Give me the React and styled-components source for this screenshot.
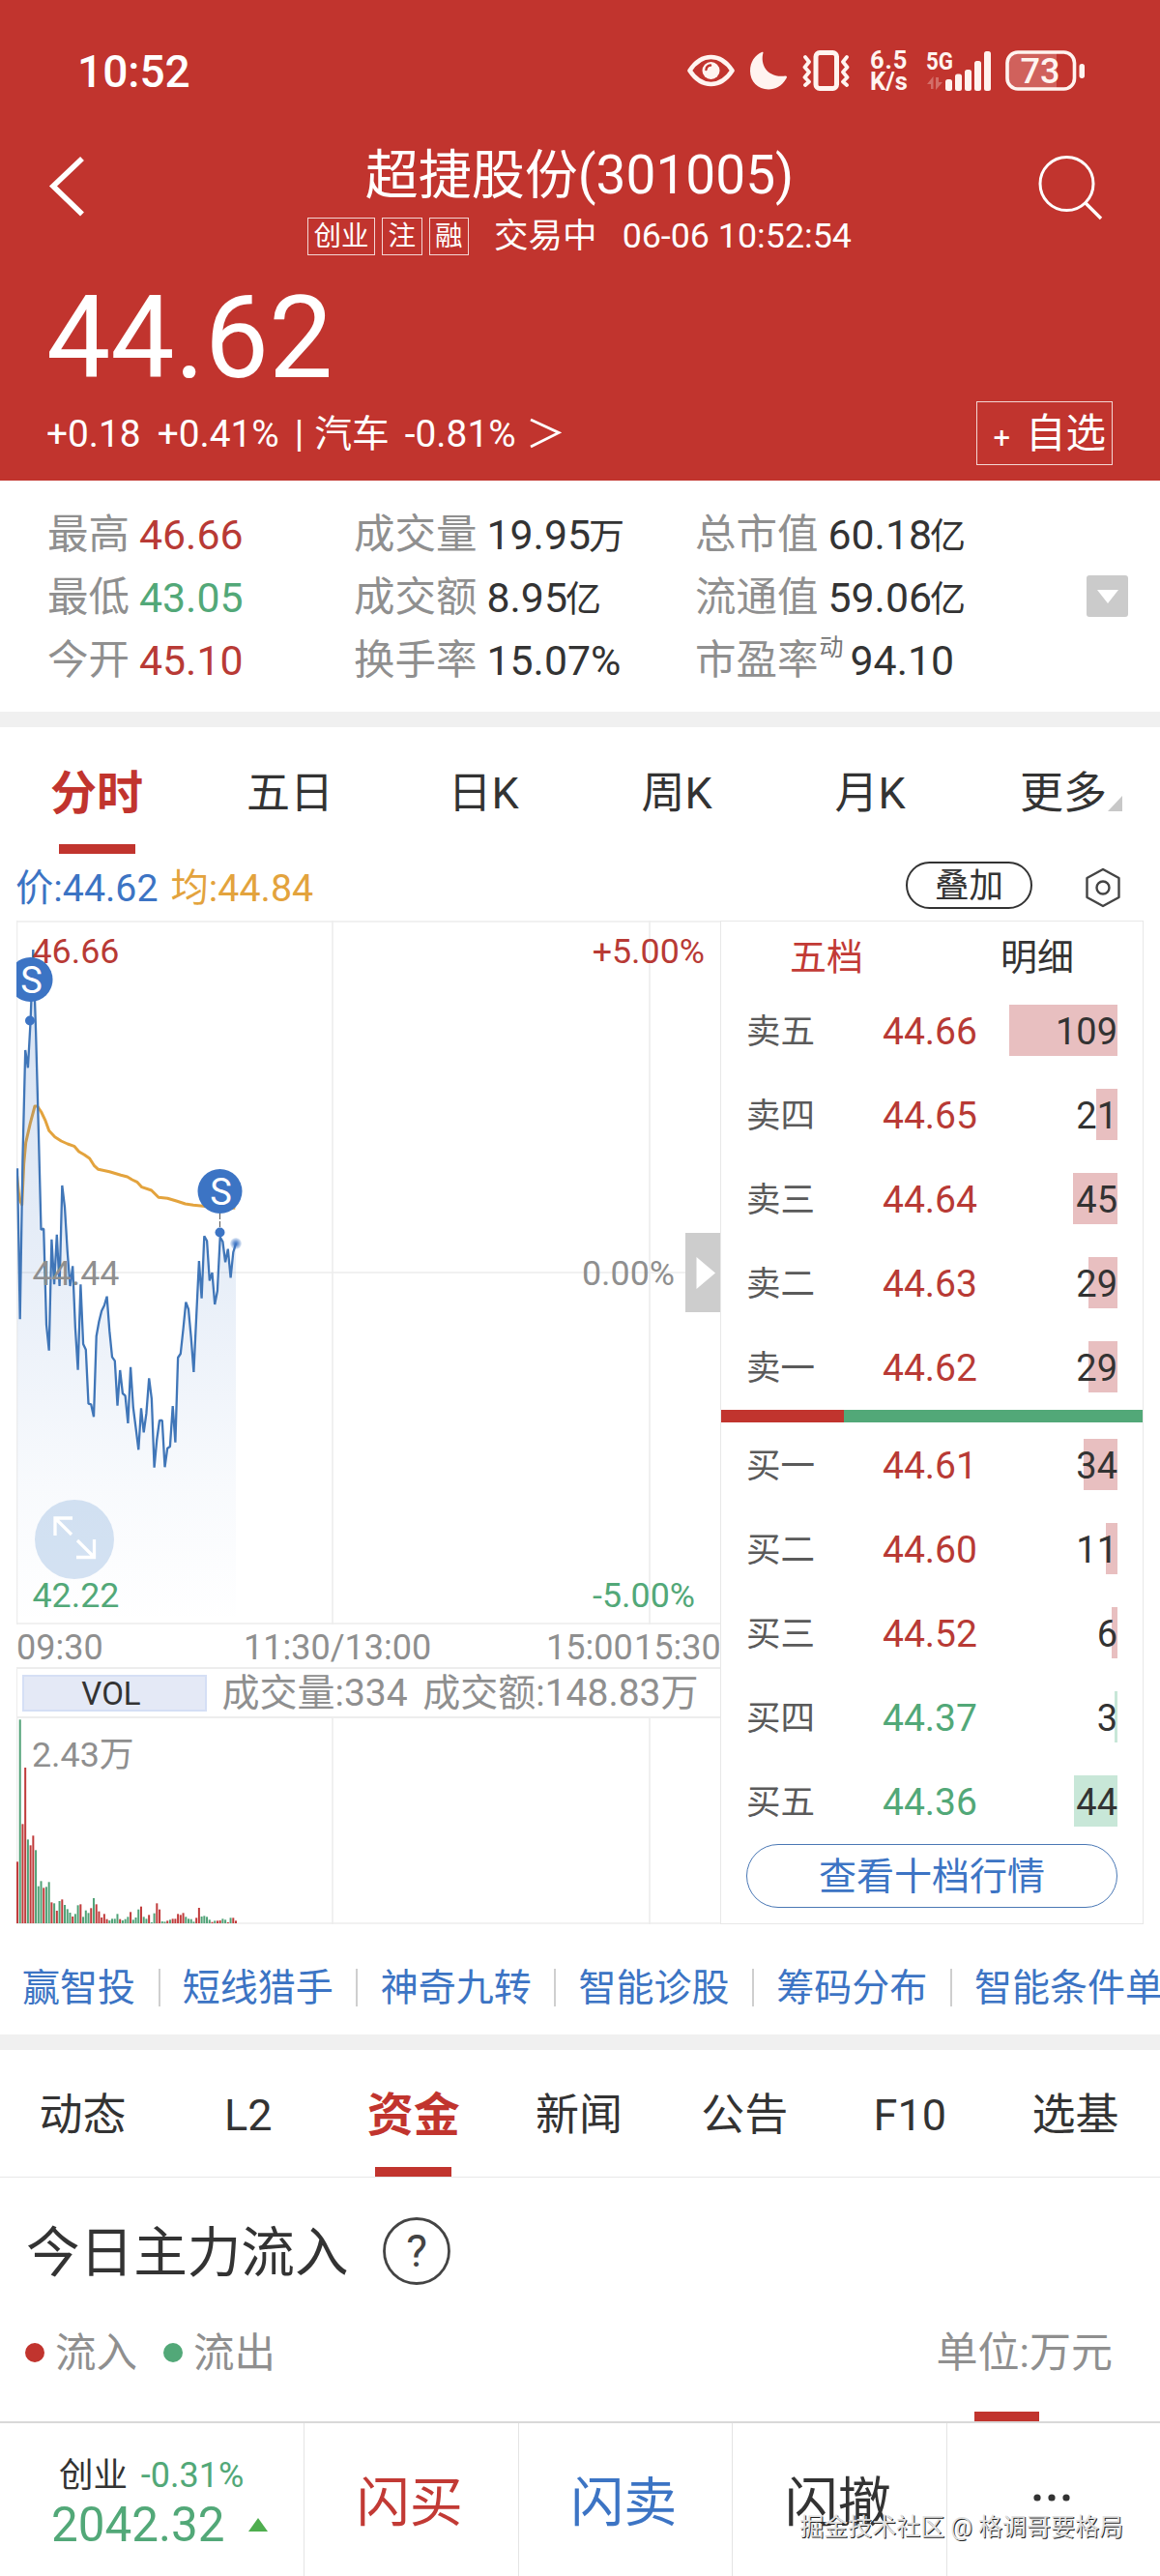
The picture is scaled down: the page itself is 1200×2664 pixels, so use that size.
import React from 'react'
import styled, { createGlobalStyle } from 'styled-components';

const RED = '#c1342e';
const GREEN = '#52a878';
const BLUE = '#3c74c4';
const GRAY = '#8f8f8f';
const DARK = '#333';

const STATS = [
    [['最高', '46.66', '#b83a35'], ['成交量', '19.95', null, null, '万'], ['总市值', '60.18', null, null, '亿']],
    [['最低', '43.05', '#52a878'], ['成交额', '8.95', null, null, '亿'], ['流通值', '59.06', null, null, '亿']],
    [['今开', '45.10', '#b83a35'], ['换手率', '15.07%'], ['市盈率', '94.10', null, '动']],
];

const SELLS = [
    { name: '卖五', price: '44.66', count: 109, bar: 112 },
    { name: '卖四', price: '44.65', count: 21, bar: 22 },
    { name: '卖三', price: '44.64', count: 45, bar: 46 },
    { name: '卖二', price: '44.63', count: 29, bar: 30 },
    { name: '卖一', price: '44.62', count: 29, bar: 30 },
];

const BUYS = [
    { name: '买一', price: '44.61', count: 34, bar: 35 },
    { name: '买二', price: '44.60', count: 11, bar: 12 },
    { name: '买三', price: '44.52', count: 6, bar: 6 },
    { name: '买四', price: '44.37', count: 3, bar: 3, down: true },
    { name: '买五', price: '44.36', count: 44, bar: 45, down: true },
];

const LINKS = ['赢智投', '短线猎手', '神奇九转', '智能诊股', '筹码分布', '智能条件单'];
const CHART_TABS = ['分时', '五日', '日K', '周K', '月K', '更多'];
const INFO_TABS = ['动态', 'L2', '资金', '新闻', '公告', 'F10', '选基'];

// 每分钟一个点, 单位 1/3 px
const PRICES = [
    625, 1093, 600, 258, 313, 167, -54, 200, 500, 815, 812, 1110, 1190, 845, 985, 830, 990, 678, 745, 880,
    990, 928, 1120, 1250, 985, 1170, 1187, 1355, 1357, 1396, 1145, 1100, 1067, 1050, 1022, 1130, 1210, 1222, 1361, 1251,
    1323, 1330, 1416, 1241, 1366, 1430, 1498, 1369, 1444, 1385, 1276, 1340, 1553, 1465, 1407, 1407, 1552, 1493, 1488, 1362,
    1475, 1212, 1200, 1125, 1040, 1062, 1150, 1257, 1080, 912, 1028, 835, 850, 973, 948, 1047, 1005, 838, 852, 916,
    875, 964, 885, 858,
];

const AVERAGE = [
    [22, 640], [30, 720], [38, 738], [44, 610], [50, 545], [64, 485], [78, 432], [86, 432], [98, 450], [110, 475],
    [122, 508], [140, 527], [160, 540], [180, 549], [200, 556], [215, 573], [232, 583], [248, 594], [262, 616], [275, 628],
    [310, 635], [345, 646], [365, 651], [380, 660], [395, 667], [410, 683], [440, 693], [462, 715], [490, 718], [520, 727],
    [545, 735], [570, 739], [600, 742], [650, 748], [700, 748],
];

const VOLUMES = [
    191, 632, 308, 483, 260, 242, 272, 227, 115, 131, 110, 113, 128, 65, 62, 39, 69, 74, 57, 44,
    33, 21, 29, 56, 59, 20, 40, 32, 47, 78, 59, 37, 18, 29, 13, 9, 14, 14, 29, 13,
    9, 13, 20, 35, 11, 18, 43, 52, 20, 14, 26, 3, 31, 62, 43, 6, 5, 8, 11, 14,
    14, 29, 26, 32, 20, 14, 13, 5, 17, 48, 21, 23, 20, 11, 4, 8, 8, 9, 14, 11,
    3, 17, 17, 8,
];
// r 涨 g 跌, 每组十分钟
const VOLUME_SIDE = [
    'rgrrgrrggg', 'rggrgrgrgg', 'grggrgggrg', 'rrrrrggggr', 'gggrgggrgg',
    'rggrrggrgr', 'rrrrggggrr', 'ggggrgrrgg', 'rgrr',
].join('');

const minuteX = (i) => 1 + i * 2.723;

function StatusIcons(){
    return(
        <StatusRight>
            <svg width="49" height="34" viewBox="0 0 49 34" fill="none">
                <path d="M2.5 17 C10 5.500 18 3 24.500 3 S39 5.500 46.500 17 C39 28.500 31 31 24.500 31 S10 28.500 2.500 17Z" stroke="#fff4f0" strokeWidth="4.600" strokeLinejoin="round"/>
                <circle cx="24.500" cy="17" r="9" fill="#fff4f0"/>
                <path d="M19.500 16 a5 5 0 0 1 4.500 -4.500" stroke={RED} strokeWidth="2.500" strokeLinecap="round"/>
            </svg>
            <svg width="40" height="40" viewBox="0 0 40 40">
                <path d="M14.500 1.500 C11 14 19 28 37.500 25.500 C39 25.500 39.500 26.500 38.500 28 C34 36 27 39.500 20 39.500 C9 39.500 1 31 1 20.500 C1 11 6 4 13 1 C14 .6 14.800 .7 14.500 1.500Z" fill="#fff4f0"/>
            </svg>
            <svg width="49" height="42" viewBox="0 0 49 42" fill="none" stroke="#fff4f0">
                <rect x="14" y="2.500" width="21.500" height="37" rx="4" strokeWidth="5"/>
                <path d="M3 7 L7 12 L2.500 17.500 L7 22.500 L2.500 28 L7 32.500 L3 36" strokeWidth="3.800" strokeLinejoin="round" strokeLinecap="round"/>
                <path d="M46 7 L42 12 L46.500 17.500 L42 22.500 L46.500 28 L42 32.500 L46 36" strokeWidth="3.800" strokeLinejoin="round" strokeLinecap="round"/>
            </svg>
            <NetSpeed><Speed>6.5</Speed><span>K/s</span></NetSpeed>
            <svg width="67" height="42" viewBox="0 0 67 42" fill="#fff4f0">
                <text x="0" y="20" fontSize="26.500" fontWeight="700" textLength="28" lengthAdjust="spacingAndGlyphs">5G</text>
                <path d="M1 35 L7.500 27 V40 H5 V35Z M10 28 V41 L17 33 H13 V28Z" opacity=".3"/>
                <rect x="20" y="30" width="7" height="12" rx="2.500"/>
                <rect x="30" y="24.500" width="7" height="17.500" rx="2.500"/>
                <rect x="40" y="20" width="7" height="22" rx="2.500"/>
                <rect x="50" y="11" width="7" height="31" rx="2.500"/>
                <rect x="60" y="1" width="7" height="41" rx="2.500"/>
            </svg>
            <svg width="83" height="42" viewBox="0 0 83 42" fill="#fff4f0">
                <path d="M13 3 H53 V39 H13 A10 10 0 0 1 3 29 V13 A10 10 0 0 1 13 3Z" opacity=".24"/>
                <rect x="2" y="2" width="69.500" height="38" rx="11" fill="none" stroke="#fff4f0" strokeWidth="3.600"/>
                <rect x="76.500" y="14" width="5.500" height="15" rx="2.700"/>
                <text x="36" y="34" fontSize="36" fontWeight="500" textAnchor="middle">73</text>
            </svg>
        </StatusRight>
    );
}

function Marker({ x, y }){
    return(
        <g>
            <circle cx={x} cy={y} r="23" fill={BLUE}/>
            <text x={x + 1} y={y + 13.5} fontSize="38" fill="#fff" textAnchor="middle">S</text>
        </g>
    );
}

function PriceChart(){
    const points = PRICES.map((p, i) => `${minuteX(i).toFixed(1)},${(48 + p / 3).toFixed(1)}`).join(' ');
    const average = AVERAGE.map(([x, y]) => `${(x / 3 - 7).toFixed(1)},${(48 + y / 3).toFixed(1)}`).join(' ');

    return(
        <ChartSvg width="728" height="728" viewBox="0 0 728 728">
            <defs>
                <linearGradient id="area" x1="0" y1="30" x2="0" y2="728" gradientUnits="userSpaceOnUse">
                    <stop offset="0" stopColor={BLUE} stopOpacity=".22"/>
                    <stop offset=".5" stopColor={BLUE} stopOpacity=".115"/>
                    <stop offset=".8" stopColor={BLUE} stopOpacity=".035"/>
                    <stop offset="1" stopColor={BLUE} stopOpacity="0"/>
                </linearGradient>
                <radialGradient id="glow">
                    <stop offset="0" stopColor={BLUE}/>
                    <stop offset=".35" stopColor={BLUE} stopOpacity=".75"/>
                    <stop offset="1" stopColor={BLUE} stopOpacity=".12"/>
                </radialGradient>
            </defs>
            <path d="M0 1 H728 M0 727 H728 M0.500 0 V728 M327 0 V728 M655 0 V728 M0 364 H728" stroke="#ededed" strokeWidth="1.600" fill="none"/>
            <polyline points={average} fill="none" stroke="#e3a33d" strokeWidth="3" strokeLinejoin="round"/>
            <polygon points={`1,728 ${points} 227,728`} fill="url(#area)"/>
            <polyline points={points} fill="none" stroke="#4076b8" strokeWidth="2.300" strokeLinejoin="bevel"/>
            <text x="16.500" y="44" fill="#b83a35">46.66</text>
            <text x="16.500" y="377">44.44</text>
            <text x="712" y="44" fill="#b83a35" textAnchor="end">+5.00%</text>
            <text x="681" y="377" textAnchor="end">0.00%</text>
            <text x="702" y="710" fill={GREEN} textAnchor="end">-5.00%</text>
            <circle cx="14" cy="103.500" r="5" fill={BLUE}/>
            <Marker x={14.5} y={61}/>
            <Marker x={210.5} y={280}/>
            <path d="M210.500 303 V318" stroke="#555" strokeWidth="1" strokeDasharray="6 2"/>
            <circle cx="210.500" cy="322.500" r="5" fill={BLUE}/>
            <circle cx="227" cy="334" r="6" fill="url(#glow)"/>
            <circle cx="60" cy="640" r="41" fill="#a9c5e6" fillOpacity=".5"/>
            <path d="M40 636 V618 H58 M41 619 L57 635 M63 641 L79.500 657.500 M62 658.500 H80.500 V640" stroke="#fff" strokeWidth="3.300" fill="none"/>
            <text x="16.500" y="710" fill={GREEN}>42.22</text>
            <rect x="692" y="323" width="36" height="82" fill="#cdcdcd"/>
            <path d="M703.500 348 L723 364.500 L703.500 381Z" fill="#fff"/>
        </ChartSvg>
    );
}

function VolumeChart(){
    return(
        <ChartSvg width="728" height="213" viewBox="0 0 728 213">
            <path d="M0.500 0 V213 M327 0 V213 M655 0 V213 M0 212 H728" stroke="#ededed" strokeWidth="1.600" fill="none"/>
            {VOLUMES.map((v, i) => (
                <rect
                    key={i}
                    x={minuteX(i) - 1}
                    y={212 - v / 3}
                    width="2"
                    height={v / 3}
                    fill={VOLUME_SIDE[i] === 'r' ? '#c03b3b' : '#50a277'}
                />
            ))}
            <text x="16" y="50">2.43万</text>
        </ChartSvg>
    );
}

function OrderRow({ item }){
    return(
        <Order>
            <OrderName>{item.name}</OrderName>
            <OrderPrice $down={item.down}>{item.price}</OrderPrice>
            <OrderCount $down={item.down} $bar={item.bar}>{item.count}</OrderCount>
        </Order>
    );
}

function App(){
    return(
        <Page>
            <GlobalStyle/>
            <Header>
                <StatusBar>
                    <Clock>10:52</Clock>
                    <StatusIcons/>
                </StatusBar>
                <NavBar>
                    <BackIcon width="40" height="64" viewBox="0 0 40 64">
                        <path d="M36 3 L6 31.500 L36 60.500" stroke="#fff" strokeWidth="5.600" fill="none"/>
                    </BackIcon>
                    <TitleBox>
                        <StockName>超捷股份(301005)</StockName>
                        <StockState>
                            <Tag>创业</Tag>
                            <Tag>注</Tag>
                            <Tag>融</Tag>
                            <Trading>交易中</Trading>
                            <span>06-06 10:52:54</span>
                        </StockState>
                    </TitleBox>
                    <SearchIcon width="68" height="68" viewBox="0 0 68 68">
                        <circle cx="29.500" cy="29" r="27.500" stroke="#fff" strokeWidth="3" fill="none"/>
                        <path d="M48.500 48.500 L65 65" stroke="#fff" strokeWidth="3.400"/>
                    </SearchIcon>
                </NavBar>
                <BigPrice>44.62</BigPrice>
                <ChangeRow>
                    <Change $gap={17}>+0.18</Change>
                    <Change $gap={16}>+0.41%</Change>
                    <Change $gap={11}>|</Change>
                    <Change $gap={16}>汽车</Change>
                    <Change $gap={13}>-0.81%</Change>
                    <svg width="34" height="34" viewBox="0 0 34 34">
                        <path d="M2 3 L31 16.500 L2 31" stroke="#fff" strokeWidth="2.800" fill="none"/>
                    </svg>
                    <AddButton><small>+</small>自选</AddButton>
                </ChangeRow>
            </Header>

            <StatBox>
                <StatGrid>
                    {STATS.flat().map(([label, value, color, sup, unit]) => (
                        <Stat key={label}>
                            <StatLabel $tight={!!sup}>{label}</StatLabel>
                            {sup && <StatSup>{sup}</StatSup>}
                            <StatValue $color={color}>{value}{unit && <small>{unit}</small>}</StatValue>
                        </Stat>
                    ))}
                </StatGrid>
                <MoreButton>
                    <svg width="22" height="14" viewBox="0 0 22 14"><path d="M0 0 H22 L11 14Z" fill="#fff"/></svg>
                </MoreButton>
            </StatBox>

            <Band/>

            <ChartTabs>
                {CHART_TABS.map((tab, i) => (
                    <Tab key={tab} $active={i === 0} $top={16}>
                        <span>
                            {tab}
                            {tab === '更多' && <Corner width="15" height="16" viewBox="0 0 15 16"><path d="M15 0 V16 H0Z" fill="#c8c8c8"/></Corner>}
                        </span>
                    </Tab>
                ))}
            </ChartTabs>

            <QuoteBar>
                <Quote $color={BLUE}>价:44.62</Quote>
                <Quote $color="#e3a33d">均:44.84</Quote>
                <OverlayButton>叠加</OverlayButton>
                <svg width="38" height="42" viewBox="0 0 38 42" fill="none" stroke="#444" strokeWidth="2.400">
                    <path d="M19 2 L35.500 11 V31 L19 40 L2.500 31 V11Z" strokeLinejoin="round"/>
                    <circle cx="19" cy="21" r="6.500"/>
                </svg>
            </QuoteBar>

            <Market>
                <ChartColumn>
                    <PriceChart/>
                    <TimeAxis>
                        <span>09:30</span>
                        <span>11:30/13:00</span>
                        <span>15:00</span>
                        <span>15:30</span>
                    </TimeAxis>
                    <VolumeHead>
                        <VolButton>VOL</VolButton>
                        <span>成交量:334</span>
                        <span>成交额:148.83万</span>
                    </VolumeHead>
                    <VolumeChart/>
                </ChartColumn>
                <OrderBook>
                    <BookTabs>
                        <BookTab $active>五档</BookTab>
                        <BookTab>明细</BookTab>
                    </BookTabs>
                    {SELLS.map((item) => <OrderRow key={item.name} item={item}/>)}
                    <RatioBar/>
                    {BUYS.map((item) => <OrderRow key={item.name} item={item}/>)}
                    <DepthButton>查看十档行情</DepthButton>
                </OrderBook>
            </Market>

            <LinkRow>
                {LINKS.map((link) => <LinkItem key={link}>{link}</LinkItem>)}
            </LinkRow>

            <Band/>

            <InfoTabs>
                {INFO_TABS.map((tab, i) => (
                    <Tab key={tab} $active={i === 2} $top={14}><span>{tab}</span></Tab>
                ))}
            </InfoTabs>

            <SectionTitle>
                <span>今日主力流入</span>
                <svg width="72" height="72" viewBox="0 0 72 72">
                    <circle cx="36" cy="36" r="33.500" fill="none" stroke="#444" strokeWidth="2.800"/>
                    <text x="36" y="52" fontSize="46" textAnchor="middle" fill="#444">?</text>
                </svg>
            </SectionTitle>
            <Legend>
                <Dot $color={RED}/><span>流入</span>
                <Dot $color={GREEN}/><span>流出</span>
                <Unit>单位:万元</Unit>
            </Legend>
            <FlowChart>
                <FlowBar/>
            </FlowChart>

            <BottomBar>
                <IndexCell>
                    <IndexTop>创业 <em>-0.31%</em></IndexTop>
                    <IndexValue>
                        2042.32
                        <svg width="20" height="14" viewBox="0 0 20 14"><path d="M10 0 L20 14 H0Z" fill="#4fae4f"/></svg>
                    </IndexValue>
                </IndexCell>
                <Action $color="#c23a35">闪买</Action>
                <Action $color={BLUE}>闪卖</Action>
                <Action $color={DARK}>闪撤</Action>
                <Action>
                    <svg width="38" height="8" viewBox="0 0 38 8" fill="#333">
                        <circle cx="4" cy="4" r="3.600"/>
                        <circle cx="19" cy="4" r="3.600"/>
                        <circle cx="34" cy="4" r="3.600"/>
                    </svg>
                </Action>
            </BottomBar>
            <Watermark>掘金技术社区 @ 格调哥要格局</Watermark>
        </Page>
    );
}

export default App;


const GlobalStyle = createGlobalStyle`
    * {
        box-sizing: border-box;
    }
    body {
        margin: 0;
        background: #fff;
        font-family: Roboto, 'Noto Sans CJK SC', sans-serif;
    }
    svg {
        display: block;
        flex: none;
    }
`;

const Page = styled.div`
    position: relative;
    display: flex;
    flex-direction: column;
    width: 1200px;
    height: 2664px;
    overflow: hidden;
    color: ${DARK};
    white-space: nowrap;
`;

const Header = styled.header`
    height: 497px;
    background: ${RED};
    color: #fff;
`;

const StatusBar = styled.div`
    display: flex;
    align-items: center;
    height: 146px;
    padding: 0 77px 0 80px;
`;

const Clock = styled.div`
    flex: 1;
    font-size: 46px;
    font-weight: 500;
    line-height: 60px;
    padding-top: 2px;
`;

const StatusRight = styled.div`
    display: flex;
    align-items: center;
    gap: 15px;
`;

const NetSpeed = styled.div`
    display: flex;
    flex-direction: column;
    width: 40px;
    margin: 0 3px 0 6px;
    font-size: 25.5px;
    font-weight: 700;
    line-height: 22px;
    color: #fff4f0;
`;

const Speed = styled.span`
    letter-spacing: 0.8px;
`;

const NavBar = styled.div`
    display: flex;
    justify-content: space-between;
    height: 136px;
    padding: 0 58px 0 49px;
`;

const BackIcon = styled.svg`
    margin-top: 15px;
`;

const SearchIcon = styled.svg`
    margin-top: 15px;
`;

const TitleBox = styled.div`
    display: flex;
    flex-direction: column;
    align-items: center;
    padding-left: 36px;
`;

const StockName = styled.div`
    height: 72px;
    padding-top: 5px;
    font-size: 55px;
    line-height: 60px;
`;

const StockState = styled.div`
    display: flex;
    align-items: center;
    height: 52px;
    font-size: 35.8px;
    line-height: 53px;
`;

const Tag = styled.span`
    height: 39px;
    margin-right: 7px;
    padding: 0 5.5px;
    border: 1px solid #f3d6d4;
    font-size: 28.5px;
    line-height: 38px;
`;

const Trading = styled.span`
    margin: 0 26px 0 19px;
    font-size: 35.5px;
`;

const BigPrice = styled.div`
    padding-left: 48px;
    height: 133px;
    font-size: 118px;
    line-height: 136px;
`;

const ChangeRow = styled.div`
    display: flex;
    align-items: center;
    height: 66px;
    padding: 0 49px 0 48px;
`;

const Change = styled.span`
    margin-right: ${({ $gap }) => $gap}px;
    font-size: 38.8px;
    line-height: 67px;
`;

const AddButton = styled.div`
    display: flex;
    align-items: center;
    justify-content: flex-end;
    width: 141px;
    height: 66px;
    margin-left: auto;
    padding-right: 6px;
    border: 1px solid #f3d6d4;
    font-size: 41.5px;
    line-height: 65px;

    small {
        padding: 9px 16px 0 0;
        font-size: 31px;
        line-height: 55px;
    }
`;

const StatBox = styled.section`
    display: flex;
    height: 239px;
    padding: 23px 33px 0 49px;
`;

const StatGrid = styled.div`
    display: grid;
    flex: 1;
    grid-template-columns: 317px 353px auto;
    grid-auto-rows: 65px;
    line-height: 66px;
    font-size: 42.5px;
`;

const Stat = styled.div`
    display: flex;
`;

const StatLabel = styled.span`
    margin-right: ${({ $tight }) => ($tight ? 1 : 10)}px;
    color: ${GRAY};
`;

const StatSup = styled.span`
    margin-right: 7px;
    color: #777;
    font-size: 25px;
    line-height: 40px;
`;

const StatValue = styled.span`
    color: ${({ $color }) => $color || DARK};
    font-size: 42.8px;

    small {
        margin-left: -2px;
        font-size: 37px;
    }
`;

const MoreButton = styled.div`
    display: flex;
    align-items: center;
    justify-content: center;
    width: 43px;
    height: 43px;
    margin-top: 75px;
    border-radius: 3px;
    background: #cbcbcb;
`;

const Band = styled.div`
    flex: none;
    height: 16px;
    background: #f0f0f0;
`;

const ChartTabs = styled.nav`
    display: flex;
    height: 131px;
`;

const InfoTabs = styled.nav`
    display: flex;
    height: 132px;
    padding-right: 2px;
    border-bottom: 1px solid #e8e8e8;
`;

const Tab = styled.div`
    display: flex;
    flex: 1;
    flex-direction: column;
    align-items: center;
    justify-content: space-between;
    padding-top: ${({ $top }) => $top}px;
    color: ${({ $active }) => ($active ? RED : DARK)};
    font-size: ${({ $active }) => ($active ? 48 : 45)}px;
    font-weight: ${({ $active }) => ($active ? 700 : 400)};

    span {
        display: flex;
        line-height: ${({ $top }) => 121 - $top}px;
    }

    &::after {
        content: '';
        width: 79px;
        height: 10px;
        background: ${({ $active }) => ($active ? RED : 'transparent')};
    }
`;

const Corner = styled.svg`
    align-self: center;
    margin: 20px -16px 0 1px;
`;

const QuoteBar = styled.div`
    display: flex;
    align-items: center;
    height: 69px;
    padding: 0 40px 0 16px;
`;

const Quote = styled.span`
    margin-right: 13px;
    padding-top: 3px;
    color: ${({ $color }) => $color};
    font-size: 39.3px;
    line-height: 69px;
`;

const OverlayButton = styled.div`
    height: 49px;
    width: 131px;
    margin: 0 54px 4px auto;
    border: 2px solid ${DARK};
    border-radius: 25px;
    font-size: 35.5px;
    line-height: 46px;
    text-align: center;
`;

const Market = styled.section`
    display: flex;
    height: 1038px;
    margin: 0 17px;
`;

const ChartColumn = styled.div`
    display: flex;
    flex-direction: column;
    width: 728px;
`;

const ChartSvg = styled.svg`
    font-size: 35.8px;
    fill: ${GRAY};
`;

const TimeAxis = styled.div`
    display: grid;
    grid-template-columns: 235px 313px 91px auto;
    height: 44px;
    color: ${GRAY};
    font-size: 36px;
    line-height: 48px;
`;

const VolumeHead = styled.div`
    display: flex;
    align-items: center;
    gap: 15.5px;
    height: 53px;
    padding-left: 5px;
    border: solid #ededed;
    border-width: 2px 0 2px 1px;
    color: ${GRAY};
    font-size: 39px;
    line-height: 51px;

    span {
        padding-top: 2px;
    }
`;

const VolButton = styled.div`
    width: 191px;
    height: 38px;
    padding-right: 7px;
    border: 2px solid #d5dff5;
    background: #e4e9f6;
    color: ${DARK};
    font-size: 33px;
    line-height: 36px;
    text-align: center;
`;

const OrderBook = styled.div`
    display: flex;
    flex-direction: column;
    flex: 1;
    border: 1.5px solid #e8e8e8;
`;

const BookTabs = styled.div`
    display: flex;
    height: 69px;
`;

const BookTab = styled.div`
    flex: 1;
    color: ${({ $active }) => ($active ? '#c23a35' : DARK)};
    font-size: 38px;
    line-height: 75px;
    text-align: center;
`;

const Order = styled.div`
    display: flex;
    align-items: center;
    height: 87px;
    padding: 0 26px;
    line-height: 56px;
`;

const OrderName = styled.span`
    width: 141px;
    padding-top: 2px;
    color: #5a5a5a;
    font-size: 35.5px;
`;

const OrderPrice = styled.span`
    flex: 1;
    padding-top: 2px;
    color: ${({ $down }) => ($down ? GREEN : '#b83a35')};
    font-size: 39px;
`;

const OrderCount = styled.span`
    width: 112px;
    height: 53px;
    background: linear-gradient(${({ $down }) => ($down ? '#c8e7d8, #c8e7d8' : '#e8bfc0, #e8bfc0')}) no-repeat right / ${({ $bar }) => $bar}px 100%;
    color: ${DARK};
    font-size: 38px;
    text-align: right;
`;

const RatioBar = styled.div`
    height: 13px;
    margin: 1px 0 0;
    background: linear-gradient(90deg, ${RED} 127px, ${GREEN} 127px);
`;

const DepthButton = styled.div`
    height: 66px;
    margin: 1px 26px 0;
    border: 1.500px solid #4a78b5;
    border-radius: 33px;
    color: ${BLUE};
    font-size: 39px;
    line-height: 67px;
    text-align: center;
`;

const LinkRow = styled.div`
    display: flex;
    align-items: center;
    height: 114px;
    padding: 16px 0 0 23px;
    color: ${BLUE};
    font-size: 39px;
`;

const LinkItem = styled.div`
    flex: none;
    height: 39px;
    line-height: 41px;

    & + & {
        margin-left: 23.5px;
        padding-left: 23.3px;
        border-left: 2px solid #cfcfcf;
    }
`;

const SectionTitle = styled.h2`
    display: flex;
    align-items: center;
    gap: 34px;
    height: 152px;
    margin: 0;
    padding-left: 27px;
    font-size: 55.6px;
    font-weight: 400;

    span {
        padding-bottom: 7px;
    }
`;

const Legend = styled.div`
    display: flex;
    align-items: center;
    height: 58px;
    padding: 0 49px 0 26px;
    color: ${GRAY};
    font-size: 42.5px;
    line-height: 61px;
`;

const Dot = styled.i`
    width: 20px;
    height: 20px;
    margin-right: 11px;
    border-radius: 50%;
    background: ${({ $color }) => $color};

    & ~ & {
        margin-left: 27px;
    }
`;

const Unit = styled.span`
    margin-left: auto;
    font-size: 43px;
`;

const FlowChart = styled.div`
    display: flex;
    align-items: flex-end;
    justify-content: flex-end;
    height: 42px;
    padding-right: 125px;
`;

const FlowBar = styled.div`
    width: 67px;
    height: 10px;
    background: ${RED};
`;

const BottomBar = styled.footer`
    display: flex;
    height: 160px;
    border-top: 2px solid #d9d9d9;
`;

const IndexCell = styled.div`
    width: 314px;
    padding-top: 29px;
`;

const IndexTop = styled.div`
    padding-left: 61px;
    font-size: 35.5px;
    line-height: 51px;

    em {
        margin-left: 5px;
        color: ${GREEN};
        font-size: 36px;
        font-style: normal;
    }
`;

const IndexValue = styled.div`
    display: flex;
    align-items: center;
    gap: 24px;
    padding-left: 53px;
    color: ${GREEN};
    font-size: 49.4px;
    line-height: 50px;
`;

const Action = styled.div`
    display: flex;
    flex: 1;
    align-items: center;
    justify-content: center;
    padding: 0 3px 4px 0;
    border-left: 1px solid #e4e4e4;
    color: ${({ $color }) => $color};
    font-size: 55px;
`;

const Watermark = styled.div`
    position: absolute;
    right: 38px;
    bottom: 30px;
    color: #e2e2e2;
    font-size: 25px;
    line-height: 40px;
    text-shadow: 1px 1px 0 #222;
`;
